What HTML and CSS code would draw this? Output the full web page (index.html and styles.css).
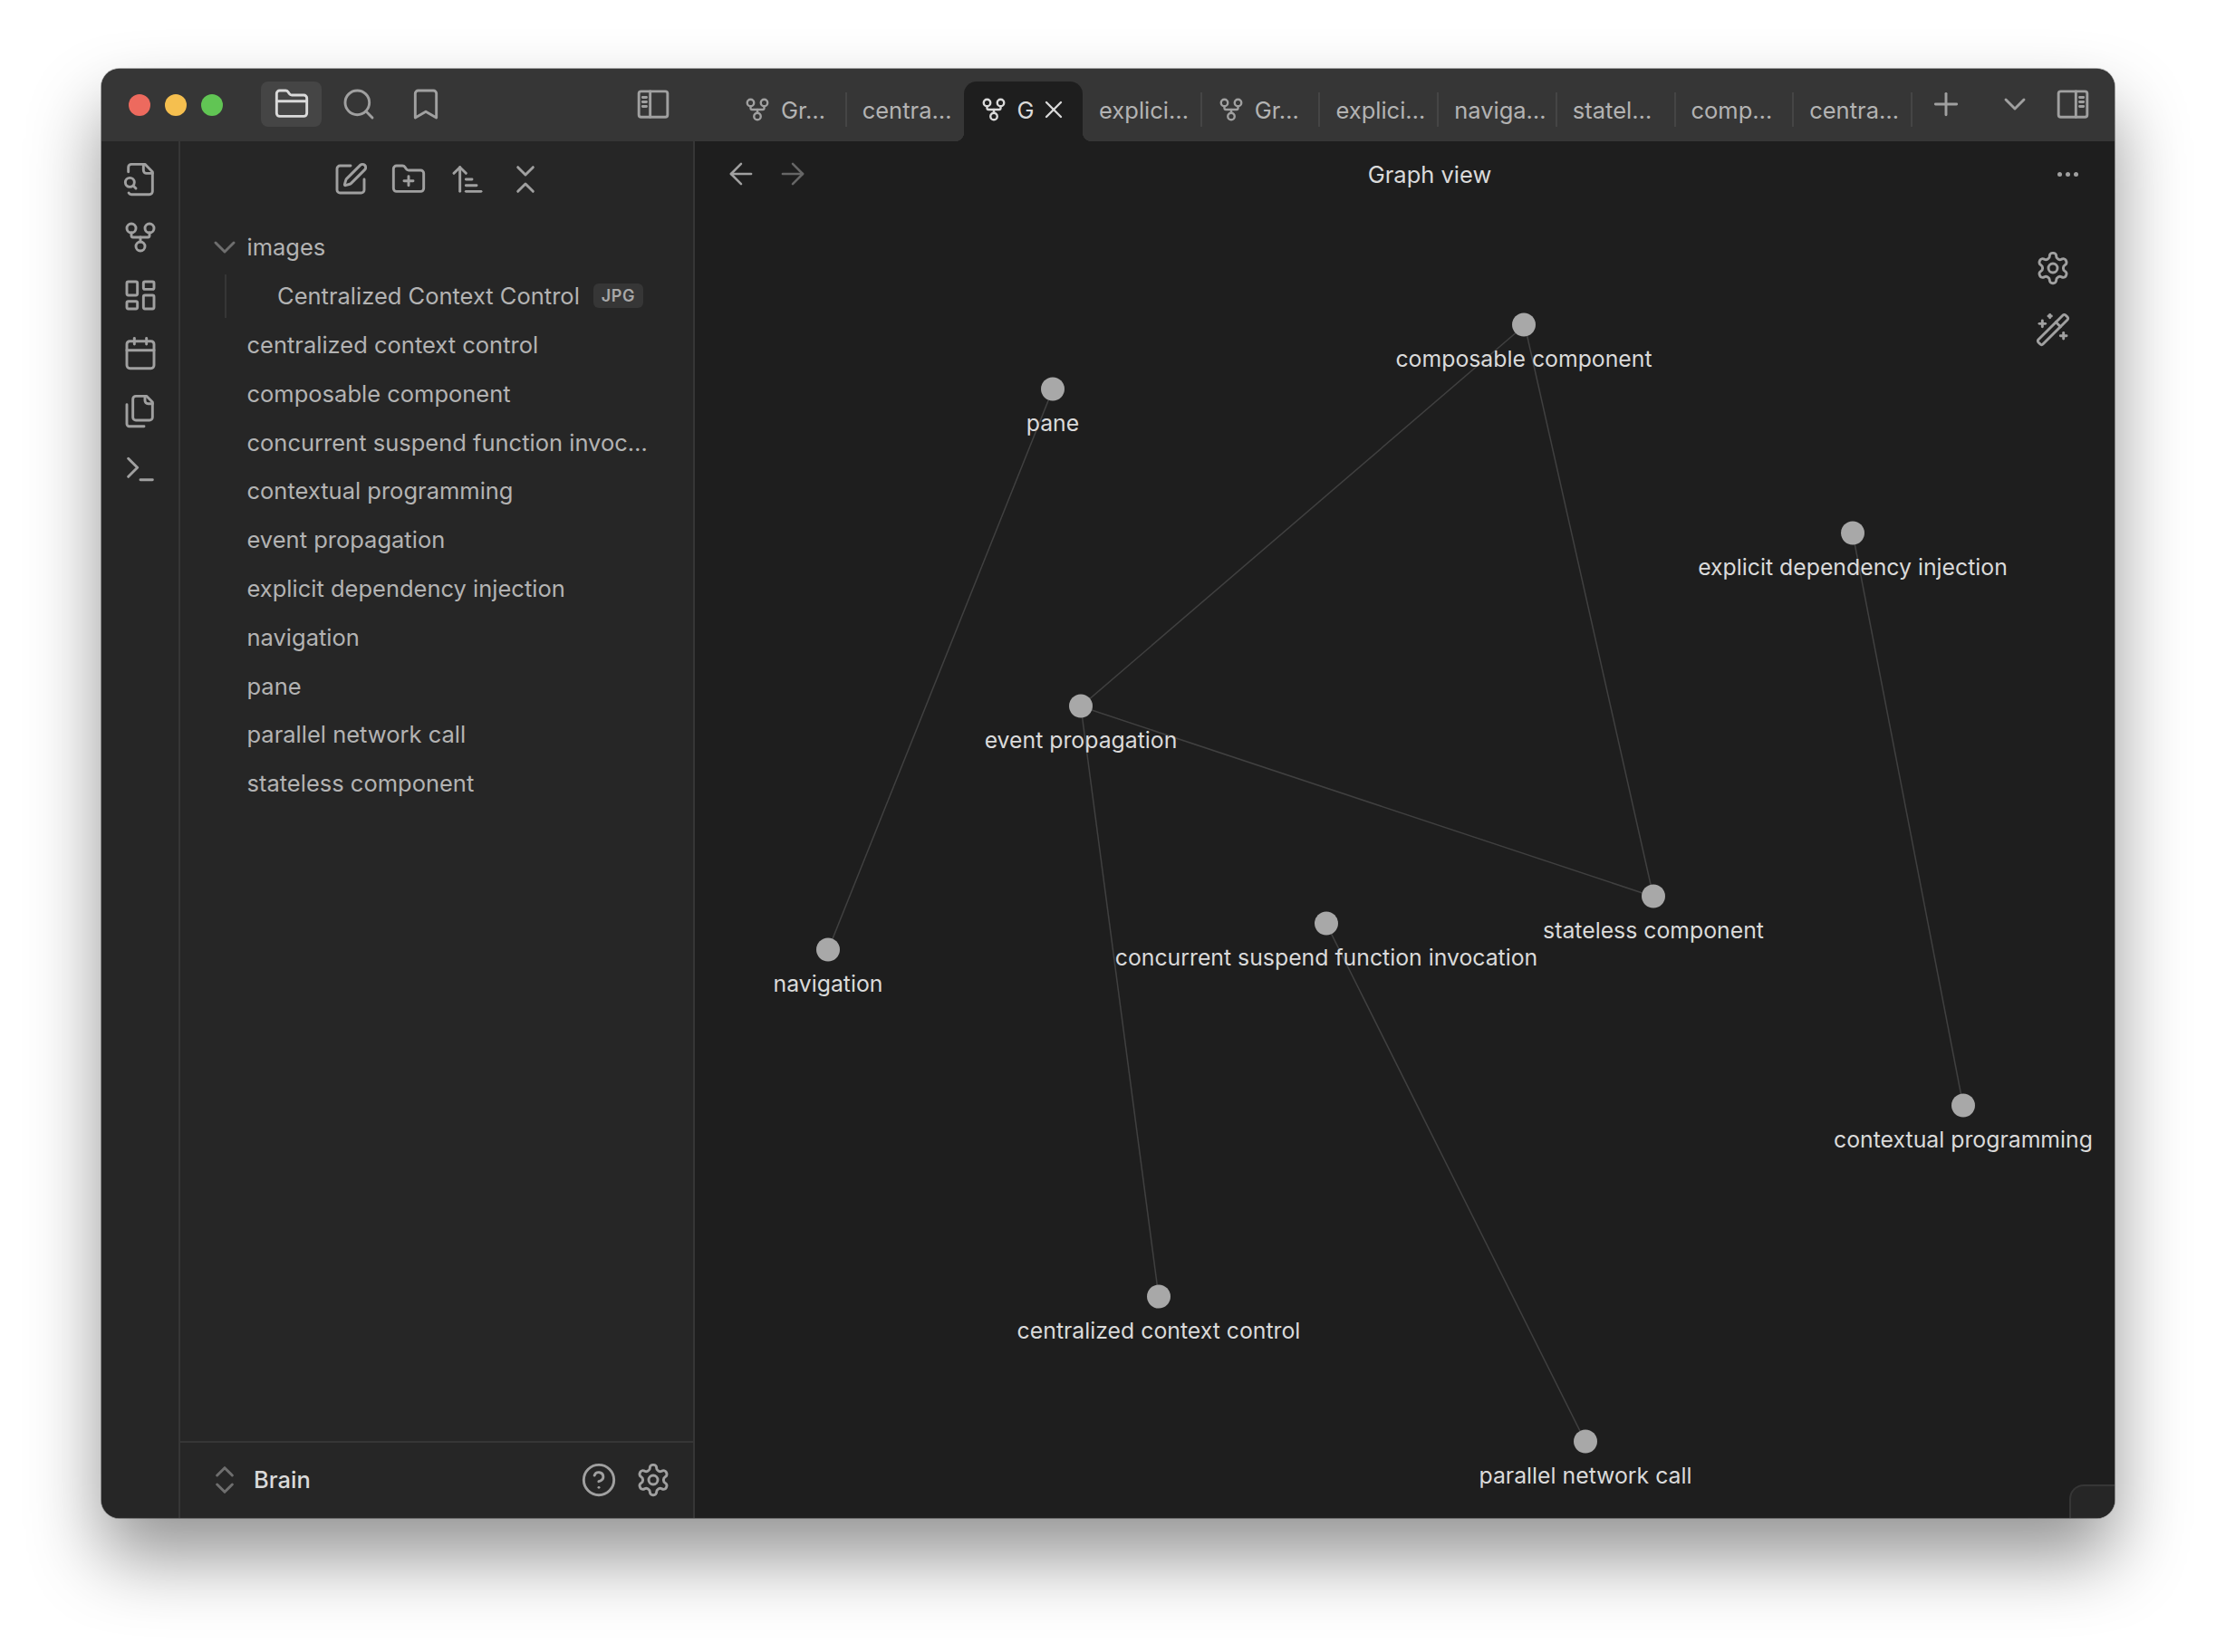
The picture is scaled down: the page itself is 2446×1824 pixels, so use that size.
FILE: index.html
```html
<!DOCTYPE html>
<html lang="en">
<head>
    <meta charset="UTF-8">
    <meta name="viewport" content="width=device-width, initial-scale=1.0">
    <title>Graph view</title>
    <link rel="stylesheet" href="styles.css">
</head>
<body>

<svg class="icon-defs" width="0" height="0">
    <symbol id="i-folder" viewBox="0 0 24 24"><path d="M20 20a2 2 0 0 0 2-2V8a2 2 0 0 0-2-2h-7.9a2 2 0 0 1-1.69-.9L9.6 3.9A2 2 0 0 0 7.93 3H4a2 2 0 0 0-2 2v13a2 2 0 0 0 2 2Z"/><path d="M2 10h20"/></symbol>
    <symbol id="i-search" viewBox="0 0 24 24"><circle cx="11" cy="11" r="8"/><path d="m21 21-4.3-4.3"/></symbol>
    <symbol id="i-bookmark" viewBox="0 0 24 24"><path d="m19 21-7-4-7 4V5a2 2 0 0 1 2-2h10a2 2 0 0 1 2 2v16z"/></symbol>
    <symbol id="i-panel-left" viewBox="0 0 24 24"><rect x="2.5" y="3.5" width="19" height="17" rx="1.5"/><path d="M10 3.5v17"/><path d="M5 7.5h2.5M5 10.5h2.5M5 13.5h2.5"/></symbol>
    <symbol id="i-panel-right" viewBox="0 0 24 24"><rect x="2.5" y="3.5" width="19" height="17" rx="1.5"/><path d="M14 3.5v17"/><path d="M16.5 7.5H19M16.5 10.5H19M16.5 13.5H19"/></symbol>
    <symbol id="i-fork" viewBox="0 0 24 24"><circle cx="12" cy="18" r="3"/><circle cx="6" cy="6" r="3"/><circle cx="18" cy="6" r="3"/><path d="M18 9v2c0 .6-.4 1-1 1H7c-.6 0-1-.4-1-1V9"/><path d="M12 12v3"/></symbol>
    <symbol id="i-file-search" viewBox="0 0 24 24"><path d="M14 2v4a2 2 0 0 0 2 2h4"/><path d="M4.268 21a2 2 0 0 0 1.727 1H18a2 2 0 0 0 2-2V7l-5-5H6a2 2 0 0 0-2 2v3"/><path d="m9 18-1.5-1.5"/><circle cx="5" cy="14" r="3"/></symbol>
    <symbol id="i-dashboard" viewBox="0 0 24 24"><rect x="3" y="3" width="7" height="9" rx="1"/><rect x="14" y="3" width="7" height="5" rx="1"/><rect x="14" y="12" width="7" height="9" rx="1"/><rect x="3" y="16" width="7" height="5" rx="1"/></symbol>
    <symbol id="i-calendar" viewBox="0 0 24 24"><path d="M8 2v4"/><path d="M16 2v4"/><rect x="3" y="4" width="18" height="18" rx="2"/><path d="M3 10h18"/></symbol>
    <symbol id="i-files" viewBox="0 0 24 24"><path d="M20 7h-3a2 2 0 0 1-2-2V2"/><path d="M9 18a2 2 0 0 1-2-2V4a2 2 0 0 1 2-2h7l4 4v10a2 2 0 0 1-2 2Z"/><path d="M3 7.6v12.8A1.6 1.6 0 0 0 4.6 22h9.8"/></symbol>
    <symbol id="i-terminal" viewBox="0 0 24 24"><path d="m4 17 6-6-6-6"/><path d="M12 19h8"/></symbol>
    <symbol id="i-edit" viewBox="0 0 24 24"><path d="M12 3H5a2 2 0 0 0-2 2v14a2 2 0 0 0 2 2h14a2 2 0 0 0 2-2v-7"/><path d="M18.375 2.625a1 1 0 0 1 3 3l-9.013 9.014a2 2 0 0 1-.853.505l-2.873.84a.5.5 0 0 1-.62-.62l.84-2.873a2 2 0 0 1 .506-.852z"/></symbol>
    <symbol id="i-folder-plus" viewBox="0 0 24 24"><path d="M12 10v6"/><path d="M9 13h6"/><path d="M20 20a2 2 0 0 0 2-2V8a2 2 0 0 0-2-2h-7.9a2 2 0 0 1-1.69-.9L9.6 3.9A2 2 0 0 0 7.93 3H4a2 2 0 0 0-2 2v13a2 2 0 0 0 2 2Z"/></symbol>
    <symbol id="i-sort" viewBox="0 0 24 24"><path d="m3 8 4-4 4 4"/><path d="M7 4v16"/><path d="M11 12h4"/><path d="M11 16h7"/><path d="M11 20h10"/></symbol>
    <symbol id="i-collapse" viewBox="0 0 24 24"><path d="m7 20 5-5 5 5"/><path d="m7 4 5 5 5-5"/></symbol>
    <symbol id="i-chevron" viewBox="0 0 24 24"><path d="m6 9 6 6 6-6"/></symbol>
    <symbol id="i-updown" viewBox="0 0 24 24"><path d="m7 15 5 5 5-5"/><path d="m7 9 5-5 5 5"/></symbol>
    <symbol id="i-plus" viewBox="0 0 24 24"><path d="M5 12h14"/><path d="M12 5v14"/></symbol>
    <symbol id="i-x" viewBox="0 0 24 24"><path d="M18 6 6 18"/><path d="m6 6 12 12"/></symbol>
    <symbol id="i-left" viewBox="0 0 24 24"><path d="m12 19-7-7 7-7"/><path d="M19 12H5"/></symbol>
    <symbol id="i-right" viewBox="0 0 24 24"><path d="M5 12h14"/><path d="m12 5 7 7-7 7"/></symbol>
    <symbol id="i-help" viewBox="0 0 24 24"><circle cx="12" cy="12" r="10"/><path d="M9.09 9a3 3 0 0 1 5.83 1c0 2-3 3-3 3"/><path d="M12 17h.01"/></symbol>
    <symbol id="i-gear" viewBox="0 0 24 24"><path d="M12.22 2h-.44a2 2 0 0 0-2 2v.18a2 2 0 0 1-1 1.73l-.43.25a2 2 0 0 1-2 0l-.15-.08a2 2 0 0 0-2.73.73l-.22.38a2 2 0 0 0 .73 2.73l.15.1a2 2 0 0 1 1 1.72v.51a2 2 0 0 1-1 1.74l-.15.09a2 2 0 0 0-.73 2.73l.22.38a2 2 0 0 0 2.73.73l.15-.08a2 2 0 0 1 2 0l.43.25a2 2 0 0 1 1 1.73V20a2 2 0 0 0 2 2h.44a2 2 0 0 0 2-2v-.18a2 2 0 0 1 1-1.73l.43-.25a2 2 0 0 1 2 0l.15.08a2 2 0 0 0 2.73-.73l.22-.39a2 2 0 0 0-.73-2.73l-.15-.08a2 2 0 0 1-1-1.74v-.5a2 2 0 0 1 1-1.74l.15-.09a2 2 0 0 0 .73-2.73l-.22-.38a2 2 0 0 0-2.73-.73l-.15.08a2 2 0 0 1-2 0l-.43-.25a2 2 0 0 1-1-1.73V4a2 2 0 0 0-2-2z"/><circle cx="12" cy="12" r="3"/></symbol>
    <symbol id="i-wand" viewBox="0 0 24 24"><path d="m21.64 3.64-1.28-1.28a1.21 1.21 0 0 0-1.72 0L2.36 18.64a1.21 1.21 0 0 0 0 1.72l1.28 1.28a1.2 1.2 0 0 0 1.72 0L21.64 5.36a1.2 1.2 0 0 0 0-1.72"/><path d="m14 7 3 3"/><path d="M5 6v4"/><path d="M19 14v4"/><path d="M10 2v2"/><path d="M7 8H3"/><path d="M21 16h-4"/><path d="M11 3H9"/></symbol>
</svg>

<div class="window">
    <header class="titlebar">
        <div class="traffic">
            <span class="light light-red"></span>
            <span class="light light-yellow"></span>
            <span class="light light-green"></span>
        </div>
        <div class="tool-group">
            <span class="tool tool-active"><svg class="icon"><use href="#i-folder"/></svg></span>
            <span class="tool"><svg class="icon"><use href="#i-search"/></svg></span>
            <span class="tool"><svg class="icon"><use href="#i-bookmark"/></svg></span>
        </div>
        <span class="tool panel-left"><svg class="icon"><use href="#i-panel-left"/></svg></span>
        <div class="tabs">
            <div class="tab"><svg class="icon tab-icon"><use href="#i-fork"/></svg><span>Gr…</span></div>
            <div class="tab"><span>centra…</span></div>
            <div class="tab tab-active"><svg class="icon tab-icon"><use href="#i-fork"/></svg><span>G</span><svg class="icon tab-close"><use href="#i-x"/></svg></div>
            <div class="tab"><span>explici…</span></div>
            <div class="tab"><svg class="icon tab-icon"><use href="#i-fork"/></svg><span>Gr…</span></div>
            <div class="tab"><span>explici…</span></div>
            <div class="tab"><span>naviga…</span></div>
            <div class="tab"><span>statel…</span></div>
            <div class="tab"><span>comp…</span></div>
            <div class="tab"><span>centra…</span></div>
        </div>
        <span class="tool tab-plus"><svg class="icon"><use href="#i-plus"/></svg></span>
        <span class="tool tab-list"><svg class="icon"><use href="#i-chevron"/></svg></span>
        <span class="tool panel-right"><svg class="icon"><use href="#i-panel-right"/></svg></span>
    </header>

    <div class="workspace">
        <nav class="ribbon">
            <svg class="icon"><use href="#i-file-search"/></svg>
            <svg class="icon"><use href="#i-fork"/></svg>
            <svg class="icon"><use href="#i-dashboard"/></svg>
            <svg class="icon"><use href="#i-calendar"/></svg>
            <svg class="icon"><use href="#i-files"/></svg>
            <svg class="icon"><use href="#i-terminal"/></svg>
        </nav>

        <aside class="sidebar">
            <div class="nav-buttons">
                <svg class="icon"><use href="#i-edit"/></svg>
                <svg class="icon"><use href="#i-folder-plus"/></svg>
                <svg class="icon"><use href="#i-sort"/></svg>
                <svg class="icon"><use href="#i-collapse"/></svg>
            </div>
            <div class="tree">
                <div class="row"><svg class="icon chevron"><use href="#i-chevron"/></svg>images</div>
                <div class="row row-child">Centralized Context Control<span class="badge">JPG</span></div>
                <div class="row">centralized context control</div>
                <div class="row">composable component</div>
                <div class="row">concurrent suspend function invoc…</div>
                <div class="row">contextual programming</div>
                <div class="row">event propagation</div>
                <div class="row">explicit dependency injection</div>
                <div class="row">navigation</div>
                <div class="row">pane</div>
                <div class="row">parallel network call</div>
                <div class="row">stateless component</div>
            </div>
            <footer class="vault">
                <svg class="icon vault-switch"><use href="#i-updown"/></svg>
                <span class="vault-name">Brain</span>
                <svg class="icon vault-help"><use href="#i-help"/></svg>
                <svg class="icon vault-gear"><use href="#i-gear"/></svg>
            </footer>
        </aside>

        <main class="main">
            <div class="view-header">
                <svg class="icon nav-back"><use href="#i-left"/></svg>
                <svg class="icon nav-forward"><use href="#i-right"/></svg>
                <span class="view-title">Graph view</span>
                <span class="more"><i></i><i></i><i></i></span>
            </div>
            <!-- viewBox uses page coordinates so nodes can be read off the screenshot -->
            <svg class="graph" viewBox="767 228 1567 1448">
                <g class="edges">
                    <line x1="1683" y1="359" x2="1193" y2="780"/>
                    <line x1="1683" y1="359" x2="1825" y2="990"/>
                    <line x1="1193" y1="780" x2="1825" y2="990"/>
                    <line x1="1193" y1="780" x2="1279" y2="1432"/>
                    <line x1="1162" y1="430" x2="914" y2="1049"/>
                    <line x1="2045" y1="589" x2="2167" y2="1221"/>
                    <line x1="1464" y1="1020" x2="1750" y2="1592"/>
                </g>
                <g class="nodes">
                    <circle cx="1682" cy="358.5" r="13"/>
                    <circle cx="1162" cy="429.5" r="13"/>
                    <circle cx="2045" cy="588.5" r="13"/>
                    <circle cx="1193" cy="779.5" r="13"/>
                    <circle cx="1825" cy="989.5" r="13"/>
                    <circle cx="1464" cy="1019.5" r="13"/>
                    <circle cx="914" cy="1048.5" r="13"/>
                    <circle cx="2167" cy="1220.5" r="13"/>
                    <circle cx="1279" cy="1431.5" r="13"/>
                    <circle cx="1750" cy="1591.5" r="13"/>
                </g>
                <g class="labels">
                    <text x="1682" y="405">composable component</text>
                    <text x="1162" y="476">pane</text>
                    <text x="2045" y="635">explicit dependency injection</text>
                    <text x="1193" y="826">event propagation</text>
                    <text x="1825" y="1036">stateless component</text>
                    <text x="1464" y="1066">concurrent suspend function invocation</text>
                    <text x="914" y="1095">navigation</text>
                    <text x="2167" y="1267">contextual programming</text>
                    <text x="1279" y="1478">centralized context control</text>
                    <text x="1750" y="1638">parallel network call</text>
                </g>
            </svg>
            <div class="graph-controls">
                <svg class="icon"><use href="#i-gear"/></svg>
                <svg class="icon"><use href="#i-wand"/></svg>
            </div>
            <div class="status-corner"></div>
        </main>
    </div>
</div>

</body>
</html>
```

FILE: styles.css
```css
* {
    box-sizing: border-box;
}
body {
    margin: 0;
    padding: 76px 112px 148px;
    background: #fff;
    font-family: Inter, "Liberation Sans", sans-serif;
    font-size: 25.5px;
    color: #b3b3b3;
}
.icon-defs {
    position: absolute;
}
.icon {
    width: 40px;
    height: 40px;
    flex: none;
    fill: none;
    stroke: #a0a0a0;
    stroke-width: 1.75;
    stroke-linecap: round;
    stroke-linejoin: round;
}
.window {
    width: 2222px;
    height: 1600px;
    display: flex;
    flex-direction: column;
    border-radius: 20px;
    overflow: hidden;
    background: #1e1e1e;
    box-shadow: 0 0 0 1px rgba(0, 0, 0, 0.35), 0 44px 80px rgba(0, 0, 0, 0.42);
}

/* title bar */
.titlebar {
    height: 80px;
    flex: none;
    display: flex;
    align-items: flex-end;
    background: #363636;
    position: relative;
}
.traffic {
    display: flex;
    gap: 16px;
    padding-left: 30px;
    height: 80px;
    align-items: center;
}
.light {
    width: 24px;
    height: 24px;
    border-radius: 50%;
}
.light-red { background: #ed6a5e; }
.light-yellow { background: #f5bf4f; }
.light-green { background: #61c554; }
.tool {
    display: flex;
    align-items: center;
    justify-content: center;
    height: 50px;
    align-self: flex-start;
    margin-top: 14px;
}
.tool-group {
    display: flex;
    align-self: flex-start;
    margin-left: 42px;
}
.tool-group .tool {
    width: 67px;
    border-radius: 8px;
}
.tool-group .tool + .tool {
    margin-left: 7px;
}
.tool-active {
    background: #454545;
}
.tool-active .icon {
    stroke: #dadada;
}
.panel-left {
    width: 40px;
    margin-left: 198px;
}
.tabs {
    display: flex;
    margin-left: 62px;
    height: 66px;
}
.tab {
    width: 130.7px;
    padding: 0 0 4px 18px;
    display: flex;
    align-items: center;
    white-space: nowrap;
    position: relative;
}
.tab::after {
    content: "";
    position: absolute;
    right: -1px;
    top: 12px;
    height: 38px;
    width: 2px;
    background: #454545;
}
.tab:has(+ .tab-active)::after {
    display: none;
}
.tab-icon {
    width: 30px;
    height: 30px;
    margin: 0 11px 0 0;
    stroke-width: 1.9;
}
.tab-active {
    background: #1e1e1e;
    border-radius: 14px 14px 0 0;
    color: #dadada;
}
.tab-active .tab-icon {
    margin-right: 10px;
}
.tab-active .icon {
    stroke: #dadada;
}
/* inverse corners at the foot of the active tab */
.tab-active::before {
    content: "";
    position: absolute;
    left: -10px;
    bottom: 0;
    width: 10px;
    height: 10px;
    background: radial-gradient(circle at 0 0, transparent 10px, #1e1e1e 10.5px);
}
.tab-active::after {
    right: -10px;
    top: auto;
    bottom: 0;
    width: 10px;
    height: 10px;
    background: radial-gradient(circle at 100% 0, transparent 10px, #1e1e1e 10.5px);
}
.tab-close {
    width: 32px;
    height: 32px;
    margin-left: 6px;
}
.tab-plus {
    width: 40px;
    margin-left: 18px;
}
.tab-list {
    width: 40px;
    margin-left: 36px;
}
.tab-list .icon {
    stroke: #a0a0a0;
}
.panel-right {
    width: 40px;
    margin-left: 24px;
}

/* body of the window */
.workspace {
    flex: 1;
    display: flex;
    min-height: 0;
}
.ribbon {
    width: 87px;
    flex: none;
    display: flex;
    flex-direction: column;
    align-items: center;
    gap: 24px;
    padding-top: 22px;
    background: #262626;
    border-right: 2px solid #363636;
}
.sidebar {
    width: 568px;
    flex: none;
    display: flex;
    flex-direction: column;
    background: #262626;
    border-right: 2px solid #363636;
}
.nav-buttons {
    height: 90px;
    flex: none;
    display: flex;
    justify-content: center;
    gap: 24.5px;
    padding: 22px 0 0 3px;
}
.tree {
    flex: 1;
}
.row {
    height: 53.8px;
    display: flex;
    align-items: center;
    padding-left: 73.5px;
    white-space: nowrap;
    position: relative;
}
.chevron {
    position: absolute;
    left: 29px;
    top: 7px;
    stroke: #6e6e6e;
}
.row-child {
    padding-left: 107px;
}
.row-child::before {
    content: "";
    position: absolute;
    left: 49px;
    top: 3px;
    bottom: 3px;
    width: 2px;
    background: #363636;
}
.badge {
    margin-left: 15px;
    padding: 0 9px;
    height: 27px;
    line-height: 27px;
    border-radius: 6px;
    background: #363636;
    font-size: 18px;
    font-weight: 600;
    letter-spacing: 0.6px;
    color: #a8a8a8;
}
.vault {
    height: 85px;
    flex: none;
    display: flex;
    align-items: center;
    padding: 0 24px 2px 29px;
    border-top: 2px solid #363636;
}
.vault-switch {
    stroke: #6e6e6e;
}
.vault-name {
    flex: 1;
    margin-left: 12px;
    color: #dadada;
    font-weight: 500;
}
.vault-help {
    margin-right: 20px;
}

/* graph pane */
.main {
    flex: 1;
    min-width: 0;
    display: flex;
    flex-direction: column;
    position: relative;
    background: #1e1e1e;
}
.view-header {
    height: 72px;
    flex: none;
    display: flex;
    align-items: center;
    padding: 0 40px 0 32px;
    position: relative;
}
.nav-back {
    width: 38px;
    height: 38px;
    stroke-width: 1.6;
}
.nav-forward {
    width: 38px;
    height: 38px;
    margin-left: 19px;
    stroke: #666;
    stroke-width: 1.6;
}
.view-title {
    position: absolute;
    left: 0;
    right: 0;
    text-align: center;
    color: #dadada;
    padding-left: 55px;
}
.more {
    margin-left: auto;
    display: flex;
    gap: 4px;
}
.more i {
    width: 5px;
    height: 5px;
    border-radius: 50%;
    background: #a0a0a0;
}
.graph {
    flex: 1;
    min-height: 0;
    display: block;
}
.edges line {
    stroke: #404040;
    stroke-width: 1.5;
}
.nodes circle {
    fill: #a8a8a8;
}
.labels text {
    fill: #dadada;
    font-family: Inter, "Liberation Sans", sans-serif;
    font-size: 24.8px;
    text-anchor: middle;
}
.graph-controls {
    position: absolute;
    right: 48px;
    top: 120px;
    display: flex;
    flex-direction: column;
    gap: 28px;
}
.status-corner {
    position: absolute;
    right: 0;
    bottom: 0;
    width: 50px;
    height: 37px;
    background: #262626;
    border: 2px solid #363636;
    border-width: 2px 0 0 2px;
    border-radius: 16px 0 0 0;
}
```
